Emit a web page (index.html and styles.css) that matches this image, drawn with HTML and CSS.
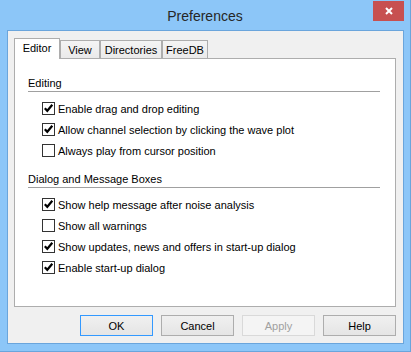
FILE: index.html
```html
<!DOCTYPE html>
<html lang="en">
<head>
    <meta charset="UTF-8">
    <title>Preferences</title>
    <link rel="stylesheet" href="styles.css">
</head>
<body>
    <div class="window">
        <div class="titlebar">
            <span class="title">Preferences</span>
            <button class="close-button" aria-label="Close">
                <svg width="8" height="8" viewBox="0 0 8 8"><path d="M1 1 L7 7 M7 1 L1 7" stroke="#fff" stroke-width="2" fill="none"/></svg>
            </button>
        </div>
        <div class="client">
            <div class="tabs">
                <div class="tab active tab-editor">Editor</div>
                <div class="tab tab-view">View</div>
                <div class="tab tab-directories">Directories</div>
                <div class="tab tab-freedb">FreeDB</div>
            </div>
            <div class="panel">
                <div class="group">
                    <div class="group-label">Editing</div>
                    <div class="separator"></div>
                    <div class="options">
                        <label class="check"><span class="box checked"></span>Enable drag and drop editing</label>
                        <label class="check"><span class="box checked"></span>Allow channel selection by clicking the wave plot</label>
                        <label class="check"><span class="box"></span>Always play from cursor position</label>
                    </div>
                </div>
                <div class="group">
                    <div class="group-label">Dialog and Message Boxes</div>
                    <div class="separator"></div>
                    <div class="options">
                        <label class="check"><span class="box checked"></span>Show help message after noise analysis</label>
                        <label class="check"><span class="box"></span>Show all warnings</label>
                        <label class="check"><span class="box checked"></span>Show updates, news and offers in start-up dialog</label>
                        <label class="check"><span class="box checked"></span>Enable start-up dialog</label>
                    </div>
                </div>
            </div>
            <div class="buttons">
                <button class="dialog-button default">OK</button>
                <button class="dialog-button">Cancel</button>
                <button class="dialog-button" disabled>Apply</button>
                <button class="dialog-button">Help</button>
            </div>
        </div>
    </div>

    <script>
        // Draw the tick inside every checked box
        const tick = '<svg width="11" height="11" viewBox="0 0 11 11"><path d="M1.8 5.2 L4.3 7.8 L9.3 1.8" stroke="#000" stroke-width="2.2" fill="none"/></svg>';
        document.querySelectorAll('.box.checked').forEach(box => {
            box.innerHTML = tick;
        });
    </script>
</body>
</html>
```

FILE: styles.css
```css
body {
    margin: 0;
    font-family: "Liberation Sans", Arial, sans-serif;
    font-size: 11px;
    color: #000;
}

.window {
    position: relative;
    width: 411px;
    height: 352px;
    box-sizing: border-box;
    background-color: #8cc6f8;
    border-right: 1px solid #6aa5dc;
    border-bottom: 1px solid #6aa5dc;
    display: flex;
    flex-direction: column;
}

.titlebar {
    height: 30px;
    display: flex;
    justify-content: center;
    align-items: center;
    flex-shrink: 0;
}

.title {
    font-size: 14px;
    color: #262626;
    margin-top: 1px;
}

.close-button {
    position: absolute;
    top: 1px;
    right: 6px;
    width: 31px;
    height: 20px;
    padding: 0;
    border: none;
    background-color: #c75050;
    display: flex;
    justify-content: center;
    align-items: center;
}

.client {
    margin: 0 6px 7px 7px;
    border: 1px solid #6aa5dc;
    background-color: #f0f0f0;
    padding: 7px 7px 7px 6px;
    flex: 1;
    display: flex;
    flex-direction: column;
}

.tabs {
    display: flex;
    align-items: flex-end;
    height: 20px;
}

.tab {
    box-sizing: border-box;
    height: 18px;
    border: 1px solid #adadad;
    border-bottom: none;
    background: linear-gradient(#f4f4f4, #eaeaea);
    display: flex;
    justify-content: center;
    align-items: center;
}

.tab.active {
    height: 21px;
    margin-bottom: -1px;
    background: #fff;
    position: relative;
    z-index: 1;
    padding-bottom: 2px;
}

.tab-editor { width: 46px; }
.tab-view { width: 40px; }
.tab-directories { width: 62px; }
.tab-freedb { width: 46px; }

.panel {
    box-sizing: border-box;
    height: 249px;
    border: 1px solid #adadad;
    background-color: #fff;
    padding: 16px 15px 0 13px;
}

.group + .group {
    margin-top: 10px;
}

.group-label {
    line-height: 16px;
    height: 16px;
}

.separator {
    height: 1px;
    background-color: #a0a0a0;
}

.options {
    margin-top: 6px;
    padding-left: 14px;
}

.check {
    height: 21px;
    display: flex;
    align-items: center;
}

.box {
    width: 13px;
    height: 13px;
    box-sizing: border-box;
    border: 1px solid #333;
    background-color: #fff;
    margin-right: 3px;
    display: flex;
    flex-shrink: 0;
}

.buttons {
    margin-top: 8px;
    display: flex;
    justify-content: flex-end;
    gap: 8px;
}

.dialog-button {
    width: 73px;
    height: 21px;
    padding: 0;
    font-family: "Liberation Sans", Arial, sans-serif;
    font-size: 11px;
    color: #000;
    border: 1px solid #adadad;
    background: linear-gradient(#f0f0f0, #e5e5e5);
}

.dialog-button.default {
    border-color: #3399ff;
}

.dialog-button:disabled {
    border-color: #d9d9d9;
    background: #f4f4f4;
    color: #a0a0a0;
}
```
